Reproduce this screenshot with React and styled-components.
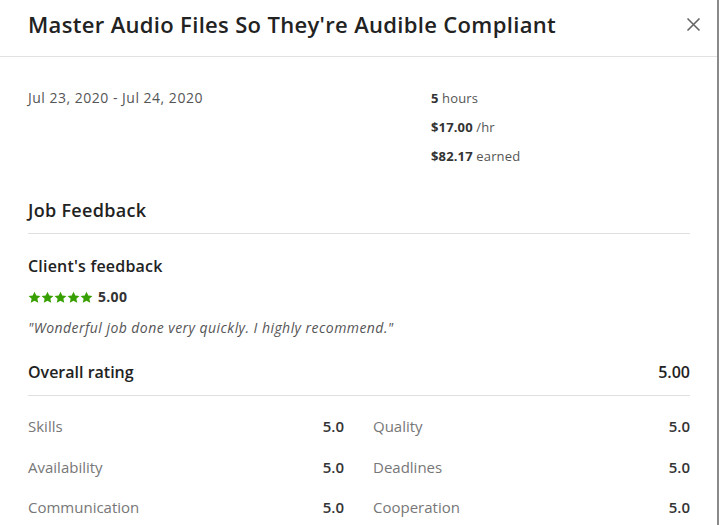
import React from 'react';
import styled, { createGlobalStyle } from 'styled-components';

const GlobalStyle = createGlobalStyle`
  body {
    margin: 0;
    background: #fff;
    font-family: 'Open Sans', 'Liberation Sans', sans-serif;
    color: #222;
  }
`;

const Modal = styled.div`
  width: 717px;
  height: 525px;
  overflow: hidden;
  border-right: 2px solid #8a8a8a;
  background: #fff;
`;

const Header = styled.div`
  display: flex;
  align-items: center;
  justify-content: space-between;
  height: 57px;
  padding: 0 16px 8px 28px;
  border-bottom: 1px solid #e2e2e2;
  box-sizing: border-box;
`;

const Title = styled.h1`
  margin: 0;
  font-size: 22px;
  font-weight: 600;
  line-height: 30px;
  letter-spacing: 0.33px;
  color: #222;
`;

const CloseButton = styled.button`
  display: flex;
  border: 0;
  background: none;
  padding: 0;
  cursor: pointer;
  color: #656565;
`;

const Body = styled.div`
  padding: 0 28px;
  width: 662px;
`;

const Summary = styled.div`
  display: grid;
  grid-template-columns: 403px 1fr;
  padding-top: 32px;
`;

const Muted = styled.div`
  font-size: 14px;
  letter-spacing: 0.5px;
  color: #555;
  line-height: 18px;
`;

const Facts = styled.div`
  display: flex;
  flex-direction: column;
  gap: 11px;
  font-size: 13px;
  line-height: 18px;
  letter-spacing: 0.15px;
  color: #555;

  b {
    font-weight: 700;
    color: #333;
  }
`;

const SectionTitle = styled.h2`
  margin: 0;
  padding: 33px 0 11px;
  font-size: 18px;
  font-weight: 600;
  line-height: 24px;
  letter-spacing: 0.3px;
  color: #222;
  border-bottom: 1px solid #e0e0e0;
`;

const SubTitle = styled.h3`
  margin: 0;
  padding-top: 21px;
  font-size: 16px;
  font-weight: 600;
  line-height: 22px;
  letter-spacing: 0.2px;
  color: #222;
`;

const StarsRow = styled.div`
  display: flex;
  align-items: center;
  gap: 5px;
  margin-top: 11px;
  font-size: 14px;
  font-weight: 700;
  line-height: 18px;
  letter-spacing: 0.3px;
  color: #333;
`;

const Stars = styled.div`
  display: flex;
`;

const Quote = styled.p`
  margin: 13px 0 0;
  font-size: 14px;
  font-style: italic;
  letter-spacing: 0.45px;
  color: #555;
  line-height: 18px;
`;

const OverallRow = styled.div`
  display: flex;
  justify-content: space-between;
  align-items: center;
  margin-top: 24px;
  padding-bottom: 12px;
  border-bottom: 1px solid #e0e0e0;
  font-size: 16px;
  font-weight: 600;
  line-height: 22px;
  color: #222;
`;

const ScoreGrid = styled.div`
  display: grid;
  grid-template-columns: 316px 317px;
  column-gap: 29px;
  row-gap: 20.5px;
  padding-top: 20px;
`;

const Score = styled.div`
  display: flex;
  justify-content: space-between;
  align-items: center;
  font-size: 15px;
  line-height: 20px;
`;

const ScoreLabel = styled.span`
  color: #777;
`;

const ScoreValue = styled.span`
  font-weight: 600;
  color: #333;
`;

const Star = () => (
  <svg width="13" height="13" viewBox="0 0 24 24" fill="#37a000">
    <path d="M12 1.2l3.3 7 7.7.9-5.7 5.2 1.6 7.6L12 18l-6.9 3.9 1.6-7.6L1 9.1l7.7-.9z" />
  </svg>
);

const scores = [
  ['Skills', '5.0'],
  ['Quality', '5.0'],
  ['Availability', '5.0'],
  ['Deadlines', '5.0'],
  ['Communication', '5.0'],
  ['Cooperation', '5.0'],
];

export default function App() {
  return (
    <>
      <GlobalStyle />
      <Modal>
        <Header>
          <Title>Master Audio Files So They're Audible Compliant</Title>
          <CloseButton aria-label="Close">
            <svg width="15" height="15" viewBox="0 0 15 15" stroke="currentColor" strokeWidth="1.6">
              <path d="M1.5 1.5l12 12M13.5 1.5l-12 12" />
            </svg>
          </CloseButton>
        </Header>
        <Body>
          <Summary>
            <Muted>Jul 23, 2020 - Jul 24, 2020</Muted>
            <Facts>
              <div><b>5</b> hours</div>
              <div><b>$17.00</b> /hr</div>
              <div><b>$82.17</b> earned</div>
            </Facts>
          </Summary>
          <SectionTitle>Job Feedback</SectionTitle>
          <SubTitle>Client's feedback</SubTitle>
          <StarsRow>
            <Stars>
              {[0, 1, 2, 3, 4].map((i) => <Star key={i} />)}
            </Stars>
            5.00
          </StarsRow>
          <Quote>"Wonderful job done very quickly. I highly recommend."</Quote>
          <OverallRow>
            <span>Overall rating</span>
            <span>5.00</span>
          </OverallRow>
          <ScoreGrid>
            {scores.map(([label, value]) => (
              <Score key={label}>
                <ScoreLabel>{label}</ScoreLabel>
                <ScoreValue>{value}</ScoreValue>
              </Score>
            ))}
          </ScoreGrid>
        </Body>
      </Modal>
    </>
  );
}
